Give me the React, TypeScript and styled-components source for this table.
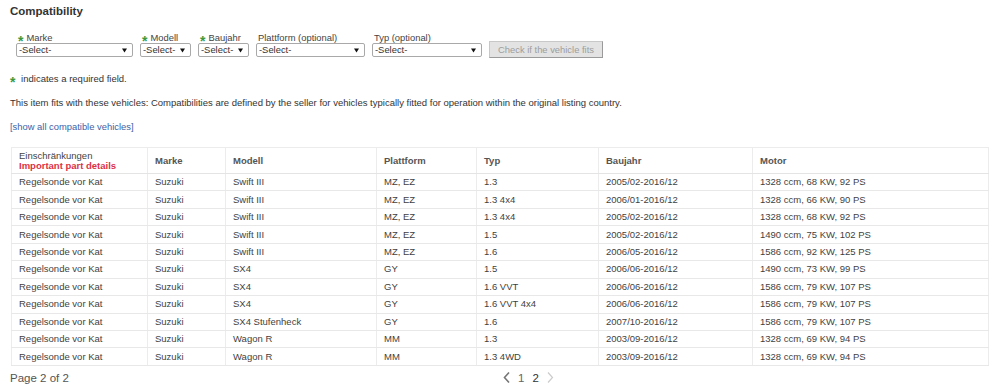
import React from "react";
import styled, { createGlobalStyle } from "styled-components";

const GlobalStyle = createGlobalStyle`
  html, body { margin: 0; padding: 0; background: #fff; }
  body { font-family: "Liberation Sans", Arial, sans-serif; color: #333; }
`;

const Page = styled.div`
  width: 1000px;
  padding: 4px 0 0 10px;
  box-sizing: border-box;
`;

const Title = styled.h2`
  margin: 0;
  font-size: 11.5px;
  line-height: 14px;
  font-weight: bold;
  color: #333;
`;

const Form = styled.div`
  display: flex;
  align-items: flex-end;
  gap: 7px;
  margin: 14px 0 0 6px;
`;

const Field = styled.div<{ $w: number }>`
  display: flex;
  flex-direction: column;
  width: ${(p) => p.$w}px;
`;

const Label = styled.label`
  display: block;
  height: 11px;
  font-size: 9.4px;
  line-height: 11px;
  color: #444;
  padding-left: 2px;
  white-space: nowrap;
`;

const Star = styled.span`
  display: inline-block;
  color: #3c9a3c;
  font-weight: bold;
  font-size: 14px;
  line-height: 0;
  vertical-align: -5px;
  margin-right: 3px;
`;

const SelectWrap = styled.div`
  position: relative;
  height: 14px;
`;

const NativeSelect = styled.select`
  appearance: none;
  -webkit-appearance: none;
  display: block;
  width: 100%;
  height: 14px;
  box-sizing: border-box;
  border: 1px solid #a9a9a9;
  border-radius: 2px;
  background: #fff;
  font-family: "Liberation Sans", Arial, sans-serif;
  font-size: 9.4px;
  color: #333;
  padding: 0 0 0 2px;
  margin: 0;
  line-height: 12px;
  outline: none;
`;

const Arrow = styled.svg`
  position: absolute;
  right: 6px;
  top: 5px;
  pointer-events: none;
`;

const CheckButton = styled.button`
  width: 114px;
  height: 17px;
  margin: 0 0 -1px 0;
  box-sizing: border-box;
  border: 1px solid #c8c8c8;
  border-right-color: #9a9a9a;
  border-bottom-color: #9a9a9a;
  background: #e3e3e3;
  color: #9d9d9d;
  font-family: "Liberation Sans", Arial, sans-serif;
  font-size: 9.4px;
  padding: 0;
  cursor: default;
`;

const Text = styled.p<{ $mt: number }>`
  margin: ${(p) => p.$mt}px 0 0 0;
  font-size: 9.5px;
  line-height: 12px;
  color: #333;
`;

const LinkText = styled.a`
  display: block;
  margin-top: 12px;
  font-size: 9.4px;
  line-height: 12px;
  color: #3b62a8;
  text-decoration: none;
`;

const Table = styled.table`
  margin: 14px 0 0 1px;
  width: 977px;
  border-collapse: collapse;
  table-layout: fixed;
  border: 1px solid #ececec;
  font-size: 9.5px;
  color: #3f3f3f;
`;

const Th = styled.th`
  height: 25px;
  padding: 0 0 0 7px;
  text-align: left;
  font-weight: bold;
  color: #555;
  border-left: 1px solid #ececec;
  border-bottom: 1px solid #e4e4e4;
  vertical-align: middle;
  line-height: 10px;
`;

const ThPlain = styled.span`
  display: block;
  font-weight: normal;
  color: #444;
`;

const ThRed = styled.span`
  display: block;
  color: #dc3145;
  font-weight: bold;
`;

const Td = styled.td`
  height: 16.45px;
  padding: 0 0 0 7px;
  border-left: 1px solid #ececec;
  border-bottom: 1px solid #e8e8e8;
  white-space: nowrap;
  line-height: 12px;
`;

const Footer = styled.div`
  display: grid;
  grid-template-columns: 493px auto;
  align-items: center;
  margin-top: 5px;
  height: 14px;
`;

const PageInfo = styled.span`
  font-size: 11.5px;
  color: #555;
`;

const Pager = styled.div`
  display: flex;
  align-items: center;
  gap: 8px;
  font-size: 11.5px;
`;

const PageNum = styled.span<{ $current?: boolean }>`
  color: ${(p) => (p.$current ? "#333" : "#666")};
`;

const cols = [136, 78, 151, 100, 122, 154, 236];

const rows: string[][] = [
  ["Swift III", "MZ, EZ", "1.3", "2005/02-2016/12", "1328 ccm, 68 KW, 92 PS"],
  ["Swift III", "MZ, EZ", "1.3 4x4", "2006/01-2016/12", "1328 ccm, 66 KW, 90 PS"],
  ["Swift III", "MZ, EZ", "1.3 4x4", "2005/02-2016/12", "1328 ccm, 68 KW, 92 PS"],
  ["Swift III", "MZ, EZ", "1.5", "2005/02-2016/12", "1490 ccm, 75 KW, 102 PS"],
  ["Swift III", "MZ, EZ", "1.6", "2006/05-2016/12", "1586 ccm, 92 KW, 125 PS"],
  ["SX4", "GY", "1.5", "2006/06-2016/12", "1490 ccm, 73 KW, 99 PS"],
  ["SX4", "GY", "1.6 VVT", "2006/06-2016/12", "1586 ccm, 79 KW, 107 PS"],
  ["SX4", "GY", "1.6 VVT 4x4", "2006/06-2016/12", "1586 ccm, 79 KW, 107 PS"],
  ["SX4 Stufenheck", "GY", "1.6", "2007/10-2016/12", "1586 ccm, 79 KW, 107 PS"],
  ["Wagon R", "MM", "1.3", "2003/09-2016/12", "1328 ccm, 69 KW, 94 PS"],
  ["Wagon R", "MM", "1.3 4WD", "2003/09-2016/12", "1328 ccm, 69 KW, 94 PS"],
];

const fields = [
  { label: "Marke", req: true, w: 117 },
  { label: "Modell", req: true, w: 51 },
  { label: "Baujahr", req: true, w: 51 },
  { label: "Plattform (optional)", req: false, w: 109 },
  { label: "Typ (optional)", req: false, w: 110 },
];

const SelectBox = () => (
  <SelectWrap>
    <NativeSelect defaultValue="">
      <option value="">-Select-</option>
    </NativeSelect>
    <Arrow width="5" height="5" viewBox="0 0 5 5">
      <path d="M0 0.5 H5 L2.5 4.5 Z" fill="#111" />
    </Arrow>
  </SelectWrap>
);

export default function App() {
  return (
    <Page>
      <GlobalStyle />
      <Title>Compatibility</Title>
      <Form>
        {fields.map((f) => (
          <Field key={f.label} $w={f.w}>
            <Label>
              {f.req && <Star>*</Star>}
              {f.label}
            </Label>
            <SelectBox />
          </Field>
        ))}
        <CheckButton disabled>Check if the vehicle fits</CheckButton>
      </Form>
      <Text $mt={16}>
        <Star>*</Star> indicates a required field.
      </Text>
      <Text $mt={12}>
        This item fits with these vehicles: Compatibilities are defined by the seller for vehicles
        typically fitted for operation within the original listing country.
      </Text>
      <LinkText href="#">[show all compatible vehicles]</LinkText>
      <Table>
        <colgroup>
          {cols.map((w, i) => (
            <col key={i} style={{ width: w }} />
          ))}
        </colgroup>
        <thead>
          <tr>
            <Th>
              <ThPlain>Einschränkungen</ThPlain>
              <ThRed>Important part details</ThRed>
            </Th>
            <Th>Marke</Th>
            <Th>Modell</Th>
            <Th>Plattform</Th>
            <Th>Typ</Th>
            <Th>Baujahr</Th>
            <Th>Motor</Th>
          </tr>
        </thead>
        <tbody>
          {rows.map((r, i) => (
            <tr key={i}>
              <Td>Regelsonde vor Kat</Td>
              <Td>Suzuki</Td>
              {r.map((c, j) => (
                <Td key={j}>{c}</Td>
              ))}
            </tr>
          ))}
        </tbody>
      </Table>
      <Footer>
        <PageInfo>Page 2 of 2</PageInfo>
        <Pager>
          <svg width="7" height="11" viewBox="0 0 7 11">
            <polyline points="6,0.5 1.5,5.5 6,10.5" fill="none" stroke="#777" strokeWidth="1.6" />
          </svg>
          <PageNum>1</PageNum>
          <PageNum $current>2</PageNum>
          <svg width="7" height="11" viewBox="0 0 7 11">
            <polyline points="1,0.5 5.5,5.5 1,10.5" fill="none" stroke="#ccc" strokeWidth="1.2" />
          </svg>
        </Pager>
      </Footer>
    </Page>
  );
}
